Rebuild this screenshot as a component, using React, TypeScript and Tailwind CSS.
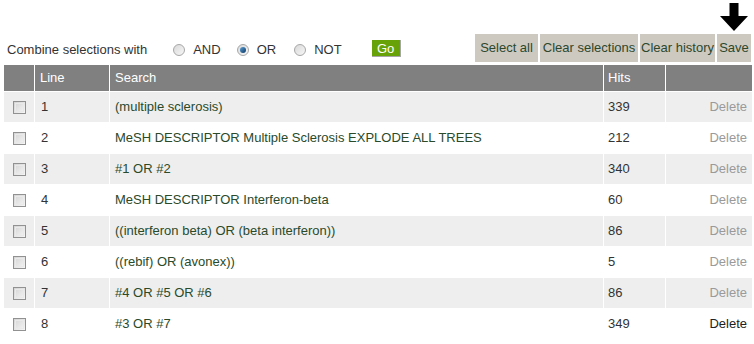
import React from 'react';

interface HistoryRow {
  line: number;
  search: string;
  hits: number;
  active?: boolean;
}

const rows: HistoryRow[] = [
  { line: 1, search: '(multiple sclerosis)', hits: 339 },
  { line: 2, search: 'MeSH DESCRIPTOR Multiple Sclerosis EXPLODE ALL TREES', hits: 212 },
  { line: 3, search: '#1 OR #2', hits: 340 },
  { line: 4, search: 'MeSH DESCRIPTOR Interferon-beta', hits: 60 },
  { line: 5, search: '((interferon beta) OR (beta interferon))', hits: 86 },
  { line: 6, search: '((rebif) OR (avonex))', hits: 5 },
  { line: 7, search: '#4 OR #5 OR #6', hits: 86 },
  { line: 8, search: '#3 OR #7', hits: 349, active: true },
];

const Radio: React.FC<{ checked?: boolean }> = ({ checked }) => (
  <span className="flex h-[12px] w-[12px] items-center justify-center rounded-full border border-[#a7a7a7] bg-gradient-to-br from-[#d9d9d9] to-[#f7f7f7]">
    {checked && (
      <span className="h-[6px] w-[6px] rounded-full bg-gradient-to-br from-[#5aa0d6] to-[#0d3a66]" />
    )}
  </span>
);

const Checkbox: React.FC = () => (
  <span className="block h-[13px] w-[13px] border border-[#919191] bg-gradient-to-br from-[#d4d4d4] to-[#f6f6f6] p-[1px]">
    <span className="block h-full w-full border border-[#e9e9e9]" />
  </span>
);

const ToolButton: React.FC<{ label: string; width: string }> = ({ label, width }) => (
  <button
    className={`h-[28px] ${width} bg-[#cdc9c1] text-[13px] text-[#2c472c] flex items-center justify-center`}
  >
    {label}
  </button>
);

const cols = 'grid grid-cols-[30px_74px_493px_61px_86px] gap-x-px';

export default function App() {
  return (
    <div className="w-[754px] h-[344px] bg-white pt-[3px] font-['Liberation_Sans',Arial,sans-serif] text-[13px] text-[#333]">
      <div className="flex justify-end pr-[5px] h-[28px]">
        <svg width="30" height="28" viewBox="0 0 30 28">
          <polygon points="10.5,0 19.5,0 19.5,13 29,13 15,28 1,13 10.5,13" fill="#000" />
        </svg>
      </div>
      <div className="mt-[3px] flex items-center h-[28px]">
        <span className="ml-[7px] mt-[4px] text-[#333]">Combine selections with</span>
        <div className="ml-[26px] mt-[4px] flex items-center">
          <Radio />
          <span className="ml-[8px]">AND</span>
          <span className="ml-[16px]"><Radio checked /></span>
          <span className="ml-[8px]">OR</span>
          <span className="ml-[18px]"><Radio /></span>
          <span className="ml-[8px]">NOT</span>
        </div>
        <button className="ml-[30px] mt-[1px] h-[17px] w-[29px] bg-[#67a308] border-r border-b border-[#a6a6a6] text-white text-[13px] leading-none flex items-center justify-center">
          Go
        </button>
        <div className="ml-auto mr-[3px] flex gap-[2px]">
          <ToolButton label="Select all" width="w-[63px]" />
          <ToolButton label="Clear selections" width="w-[98px]" />
          <ToolButton label="Clear history" width="w-[75px]" />
          <ToolButton label="Save" width="w-[34px]" />
        </div>
      </div>

      <div className="ml-[4px] mt-[3px] w-[748px]">
        <div className={`${cols} h-[26px] bg-white text-white`}>
          <div className="bg-[#808080]" />
          <div className="bg-[#808080] flex items-center pl-[5px]">Line</div>
          <div className="bg-[#808080] flex items-center pl-[5px]">Search</div>
          <div className="bg-[#808080] flex items-center pl-[4px]">Hits</div>
          <div className="bg-[#808080]" />
        </div>
        {rows.map((row) => {
          const bg = row.line % 2 === 1 ? 'bg-[#eeeeee]' : 'bg-white';
          return (
            <div key={row.line} className={`${cols} mt-px h-[30px]`}>
              <div className={`${bg} flex items-center pl-[9px]`}>
                <Checkbox />
              </div>
              <div className={`${bg} flex items-center pl-[6px]`}>{row.line}</div>
              <div className={`${bg} flex items-center pl-[5px] text-[#2a4a2a]`}>{row.search}</div>
              <div className={`${bg} flex items-center pl-[4px]`}>{row.hits}</div>
              <div
                className={`${bg} flex items-center justify-end pr-[5px] ${
                  row.active ? 'text-[#222]' : 'text-[#9a9a9a]'
                }`}
              >
                Delete
              </div>
            </div>
          );
        })}
      </div>
    </div>
  );
}
